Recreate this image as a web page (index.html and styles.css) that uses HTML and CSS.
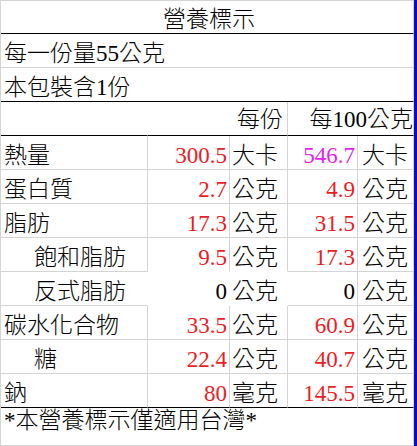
FILE: index.html
```html
<!DOCTYPE html>
<html lang="zh-Hant">
<head>
<meta charset="utf-8">
<title>營養標示</title>
<link rel="stylesheet" href="styles.css">
</head>
<body>
<div class="sheet">
  <div class="grid">
    <div class="c span5 title bk">營養標示</div>
    <div class="c span5">每一份量55公克</div>
    <div class="c span5 bk">本包裝含1份</div>

    <div class="c nor bk"></div>
    <div class="c span2 num bk hd1">每份</div>
    <div class="c span2 num bk hd2">每100公克</div>

    <div class="c lab">熱量</div>
    <div class="c num red">300.5</div>
    <div class="c unit">大卡</div>
    <div class="c num2 mag">546.7</div>
    <div class="c unit2">大卡</div>

    <div class="c lab">蛋白質</div>
    <div class="c num red">2.7</div>
    <div class="c unit">公克</div>
    <div class="c num2 red">4.9</div>
    <div class="c unit2">公克</div>

    <div class="c lab">脂肪</div>
    <div class="c num red">17.3</div>
    <div class="c unit">公克</div>
    <div class="c num2 red">31.5</div>
    <div class="c unit2">公克</div>

    <div class="c lab ind">飽和脂肪</div>
    <div class="c num red nob">9.5</div>
    <div class="c unit nob">公克</div>
    <div class="c num2 red">17.3</div>
    <div class="c unit2">公克</div>

    <div class="c lab ind nor">反式脂肪</div>
    <div class="c num nor nob">0</div>
    <div class="c unit nor nob">公克</div>
    <div class="c num2">0</div>
    <div class="c unit2">公克</div>

    <div class="c lab">碳水化合物</div>
    <div class="c num red">33.5</div>
    <div class="c unit">公克</div>
    <div class="c num2 red">60.9</div>
    <div class="c unit2">公克</div>

    <div class="c lab ind">糖</div>
    <div class="c num red">22.4</div>
    <div class="c unit">公克</div>
    <div class="c num2 red">40.7</div>
    <div class="c unit2">公克</div>

    <div class="c lab bk">鈉</div>
    <div class="c num red bk">80</div>
    <div class="c unit bk">毫克</div>
    <div class="c num2 red bk">145.5</div>
    <div class="c unit2 bk">毫克</div>

    <div class="c span5 foot">*本營養標示僅適用台灣*</div>
  </div>
  <div class="bar"></div>
</div>
</body>
</html>
```
FILE: styles.css
```css
html, body {
  margin: 0;
  padding: 0;
  background: #ffffff;
}

body {
  font-family: "Liberation Serif", "Noto Sans CJK TC", serif;
  font-size: 23px;
  font-weight: 300;
  color: #000000;
}

.sheet {
  display: flex;
  width: 417px;
  height: 446px;
  overflow: hidden;
}

.grid {
  display: grid;
  grid-template-columns: 147px 82px 58px 70px 56px;
  border-left: 1px solid #d4d4d4;
  border-top: 1px solid #d4d4d4;
  width: 414px;
  box-sizing: border-box;
  align-content: start;
}

.bar {
  width: 3px;
  height: 446px;
  background: #0b0bc4;
}

.c {
  box-sizing: border-box;
  height: 34px;
  padding-top: 8px;
  line-height: 23px;
  white-space: nowrap;
  border-right: 1px solid #d4d4d4;
  border-bottom: 1px solid #d4d4d4;
}

.span5 { grid-column: span 5; padding-left: 3px; }
.span2 { grid-column: span 2; }

.title {
  height: 33px;
  padding-top: 7px;
  padding-left: 4px;
  text-align: center;
}

.bk { border-bottom-color: #000000; }
.nor { border-right-color: #ffffff; }
.nob { border-bottom-color: #ffffff; }

.lab { padding-left: 3px; }
.ind { padding-left: 33px; }

.num { text-align: right; padding-right: 2px; }
.num2 { text-align: right; padding-right: 2px; }
.unit { padding-left: 2px; }
.unit2 { padding-left: 4px; }

.hd1 { padding-right: 4px; padding-top: 6px; }
.hd2 { padding-right: 0; padding-top: 6px; }

.red { color: #ec1c24; }
.mag { color: #e61ee6; }

.foot {
  height: 38px;
  padding-top: 1px;
}
```
